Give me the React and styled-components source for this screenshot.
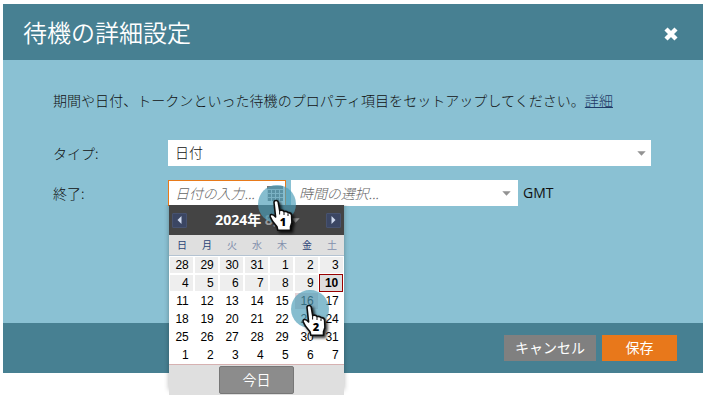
import React from 'react';
import styled, { createGlobalStyle } from 'styled-components';

const Global = createGlobalStyle`
  * { box-sizing: border-box; }
  body { margin: 0; background: #fff; font-family: "Open Sans", "Noto Sans CJK JP", sans-serif; }
`;
const cjk = '"Noto Sans CJK JP", sans-serif';

const Page = styled.div`
  height: 401px; padding: 4px 0 0 3px;
`;
const Dialog = styled.main`
  width: 700px; height: 369px;
  display: flex; flex-direction: column;
  background: #8ac1d3; color: #111;
`;
const Header = styled.header`
  height: 56px; padding: 0 24px 0 20px;
  display: flex; align-items: center; justify-content: space-between;
  background: #478092; color: #fff;
`;
const Title = styled.h1`
  margin: 0 0 1px; font: 350 24px/36px ${cjk};
`;
const CloseButton = styled.button`
  width: 16px; height: 16px; margin-top: 4px; padding: 0; border: 0; background: none; display: flex;
`;
const Body = styled.section`
  flex: 1; padding: 29px 52px 0 50px; font: 300 14px/22px "Open Sans", ${cjk};
`;
const Intro = styled.p`
  margin: 0; height: 51px; white-space: nowrap; font-family: ${cjk}; letter-spacing: 0.04px;
`;
const HelpLink = styled.a`
  color: #1f3a66; text-decoration: underline;
`;
const Field = styled.div`
  height: 26px; margin-bottom: 14px;
  display: grid; grid-template-columns: 115px 1fr; align-items: center;
`;
const Controls = styled.div`
  display: flex; align-items: center; height: 26px;
`;
const Label = styled.label`
  margin-top: -1px; font-family: ${cjk};
`;
const Unit = styled.span`
  margin-top: -1px; font-weight: 400; font-size: 14px;
`;
const Picker = styled.div`
  width: ${p => p.$width}px; height: 26px; padding: 0 ${p => (p.$active ? 2 : p.$gap ? 7 : 5)}px 0 ${p => (p.$active ? 6 : p.$gap ? 8 : 7)}px;
  display: flex; align-items: center; justify-content: space-between;
  background: #fff; border: ${p => (p.$active ? '1px solid #e87a1a' : '0')};
  margin-right: ${p => p.$gap || 0}px; white-space: nowrap;
`;
const Value = styled.span`
  margin-top: -2px; font-family: ${cjk};
`;
const Placeholder = styled.span`
  color: #666; font: italic 300 14px/22px ${cjk}; letter-spacing: -0.1px;
`;
const DateAnchor = styled.div`
  position: relative;
`;
const Calendar = styled.div`
  position: absolute; z-index: 1; left: 1px; top: 25px; width: 175px; height: 190px;
  background: #fff; box-shadow: 0 -5px 5px rgba(0, 0, 0, 0.3); clip-path: inset(0 -5px 0 -5px); color: #000;
`;
const MonthBar = styled.div`
  height: 30px; padding: 0 3px; display: flex; align-items: center; justify-content: space-between;
  background: #444; color: #fff;
`;
const MonthName = styled.div`
  display: flex; align-items: center; gap: 4px; padding-left: 2px; white-space: nowrap;
  font: 700 14px/20px "Open Sans", ${cjk};
`;
const MonthPart = styled.span`
  color: #999;
`;
const StepButton = styled.button`
  width: 15px; height: 15px; padding: 0; border: 1px solid #47526f; border-radius: 1px; background: #3b4663;
  display: flex; align-items: center; justify-content: center;
`;
const Weekdays = styled.div`
  height: 21px; display: grid; grid-template-columns: repeat(7, 25px); border-bottom: 1px solid #b4c3d2;
  background: #dfdfdf; font: 400 10px/19px ${cjk}; text-align: center;
`;
const Weekday = styled.span`
  padding-left: 1px;
  color: ${p => (p.$pale ? '#8390ad' : '#2b4376')};
`;
const Days = styled.div`
  height: 108px; display: grid; grid-template: repeat(6, 18px) / repeat(7, 25px);
  font: 400 12px/17px "Liberation Sans", sans-serif; letter-spacing: -0.2px; text-align: right;
`;
const Day = styled.span`
  height: 16px; margin: 1px; padding: 0 4.6px 0 0;
  ${p => p.$kind === 'off' && 'background: #eee;'}
  ${p => p.$kind === 'picked' && 'background: #e6d3d6;'}
  ${p => p.$kind === 'today' && 'background: #ddd; outline: 1px solid #990000; font-weight: 700; margin-right: 2px; padding-right: 4px;'}
`;
const CalendarFooter = styled.div`
  height: 31px; border-top: 1px solid #d6b1b1; background: #dfdfdf;
  display: flex; align-items: center; justify-content: center;
`;
const TodayButton = styled.button`
  width: 75px; height: 28px; padding: 0 0 2px; border: 1px solid #777; border-radius: 2px;
  background: #8c8c8c; color: #fff; font: 350 14px/24px ${cjk};
`;
const Footer = styled.footer`
  height: 50px; padding: 12px 26px 0 0; display: flex; justify-content: flex-end; gap: 6px; background: #478092;
`;
const Action = styled.button`
  width: ${p => (p.$primary ? 75 : 92)}px; height: 26px; padding: 0 0 2px; border: 0;
  background: ${p => (p.$primary ? '#e8781b' : '#808080')}; color: #fff; font: 400 14px/24px ${cjk};
`;
const Pointer = styled.svg`
  position: absolute; z-index: 2; left: ${p => p.$x}px; top: ${p => p.$y}px; width: 50px; height: 60px; overflow: visible;
`;

const Caret = () => <svg width="9" height="5" viewBox="0 0 9 5"><path d="M.3.3h8.4L4.5 4.7z" fill="#929292" /></svg>;

const GridIcon = () => (
  <svg width="16" height="15" viewBox="0 0 16 15">
    <path d="M0 0h16v15H0z" fill="#777" />
    <path d="M0 3.5h16M0 7.5h16M0 11.5h16M.5 3v12M4.5 3v12M8.5 3v12M12.5 3v12" stroke="#ddd" />
  </svg>
);

const Arrow = ({ flip }) => (
  <svg width="5" height="8" viewBox="0 0 5 8"><path d={flip ? 'M.5 0 4.5 4 .5 8z' : 'M4.5 0 .5 4l4 4z'} fill="#cfd9ee" /></svg>
);

const Step = ({ x, y, n }) => (
  <Pointer $x={x} $y={y} viewBox="0 0 50 60">
    <defs>
      <filter id={`shade${n}`} x="-30%" y="-30%" width="170%" height="170%">
        <feDropShadow dx="2" dy="2" stdDeviation="1.8" floodOpacity=".8" />
      </filter>
    </defs>
    <circle cx="20" cy="20" r="19" fill="#4d9db8" fillOpacity=".68" />
    <g filter={`url(#shade${n})`}>
      <path d="M17 18.5q0-2 2-2t2.3 2l1.4 8q3-1 4.3 1 3-.6 4 1.2 3-.3 3.6 2.3l.3 7.5-1.4 4.2v3.5H20.8l-.8-3.5-4.4-5.4-2.2-4.2q-.8-2 .8-2.6 2-.4 4.4 2.4z" fill="#fff" stroke="#111" strokeWidth="1.6" strokeLinejoin="round" />
      <path d="M22.6 26.5v4M27 28v3M31 29.5v2.5" stroke="#111" />
    </g>
    <text x="26" y="42.3" textAnchor="middle" fontFamily="Open Sans, sans-serif" fontSize="11" fontWeight="800">{n}</text>
  </Pointer>
);

const weekdays = ['日', '月', '火', '水', '木', '金', '土'];
const days = [28, 29, 30, 31, ...Array.from({ length: 31 }, (_, i) => i + 1), 1, 2, 3, 4, 5, 6, 7];
const kindOf = i => (i === 13 ? 'today' : i < 13 ? 'off' : i === 19 ? 'picked' : 'open');

export default function App() {
  return (
    <Page>
      <Global />
      <Dialog>
        <Header>
          <Title>待機の詳細設定</Title>
          <CloseButton aria-label="閉じる">
            <svg width="16" height="16" viewBox="0 0 16 16"><path d="m3 3 10 10M13 3 3 13" stroke="#fff" strokeWidth="4.4" /></svg>
          </CloseButton>
        </Header>
        <Body>
          <Intro>期間や日付、トークンといった待機のプロパティ項目をセットアップしてください。<HelpLink>詳細</HelpLink></Intro>
          <Field>
            <Label>タイプ:</Label>
            <Picker $width={483}><Value>日付</Value><Caret /></Picker>
          </Field>
          <Field>
            <Label>終了:</Label>
            <Controls>
              <DateAnchor>
                <Picker $width={118} $gap={5} $active><Placeholder>日付の入力...</Placeholder><GridIcon /></Picker>
                <Calendar>
                  <MonthBar>
                    <StepButton aria-label="前月"><Arrow /></StepButton>
                    <MonthName><span>2024年 <MonthPart>8月</MonthPart></span><Caret /></MonthName>
                    <StepButton aria-label="翌月"><Arrow flip /></StepButton>
                  </MonthBar>
                  <Weekdays>{weekdays.map((d, i) => <Weekday key={d} $pale={[2, 3, 4, 6].includes(i)}>{d}</Weekday>)}</Weekdays>
                  <Days>{days.map((d, i) => <Day key={i} $kind={kindOf(i)}>{d}</Day>)}</Days>
                  <CalendarFooter><TodayButton>今日</TodayButton></CalendarFooter>
                </Calendar>
                <Step x={89} y={4} n={1} />
                <Step x={122} y={109} n={2} />
              </DateAnchor>
              <Picker $width={227} $gap={5}><Placeholder>時間の選択...</Placeholder><Caret /></Picker>
              <Unit>GMT</Unit>
            </Controls>
          </Field>
        </Body>
        <Footer>
          <Action>キャンセル</Action>
          <Action $primary>保存</Action>
        </Footer>
      </Dialog>
    </Page>
  );
}
